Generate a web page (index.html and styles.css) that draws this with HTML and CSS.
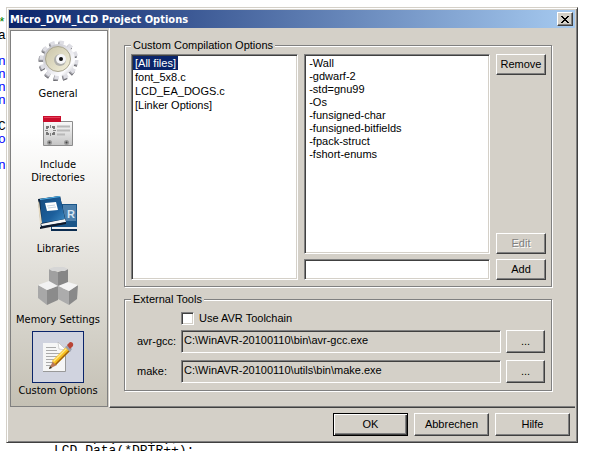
FILE: index.html
```html
<!DOCTYPE html>
<html lang="en">

<head>
    <meta charset="UTF-8">
    <title>Micro_DVM_LCD Project Options</title>
    <link rel="stylesheet" href="styles.css">
</head>

<body>
    <!-- source editor behind the dialog -->
    <pre class="editor"><span class="comment">*</span>
a

<span class="keyword">n
n
n
n</span>

C
<span class="keyword">o</span>

<span class="keyword">n</span>
</pre>
    <pre class="editor-end">LCD_Spi(0xB0|i);
LCD_Data(*DPTR++);</pre>

    <div class="window">
        <header class="titlebar">
            <h1>Micro_DVM_LCD Project Options</h1>
            <button type="button" class="close" aria-label="Close">
                <svg width="8" height="7" viewBox="0 0 8 7" shape-rendering="crispEdges">
                    <path d="M0 0h2v1h1v1h2v-1h1v-1h2v1h-1v1h-1v1h-1v1h1v1h1v1h1v1h-2v-1h-1v-1h-2v1h-1v1h-2v-1h1v-1h1v-1h1v-1h-1v-1h-1v-1h-1z" />
                </svg>
            </button>
        </header>

        <div class="main">
            <nav class="sidebar">
                <a href="#general" class="item">
                    <span class="icon">
                        <svg width="42" height="42" viewBox="0 0 42 42">
                            <defs>
                                <linearGradient id="steel" x1="0" y1="0" x2="1" y2="1">
                                    <stop offset="0" stop-color="#b8b8be" />
                                    <stop offset=".4" stop-color="#dcdce2" />
                                    <stop offset=".75" stop-color="#fdfdff" />
                                    <stop offset="1" stop-color="#b4b4ba" />
                                </linearGradient>
                                <linearGradient id="dish" x1="0" y1="0" x2="1" y2="1">
                                    <stop offset="0" stop-color="#c9c4a8" />
                                    <stop offset="1" stop-color="#f3f0dc" />
                                </linearGradient>
                            </defs>
                            <circle cx="21" cy="23" r="17" fill="none" stroke="#66666c" stroke-width="5" stroke-dasharray="4.2 4.7" />
                            <circle cx="21" cy="22" r="17" fill="none" stroke="#a2a2a8" stroke-width="5" stroke-dasharray="4.2 4.7" />
                            <circle cx="22" cy="21" r="17" fill="none" stroke="#dedee4" stroke-width="5" stroke-dasharray="4.2 4.7" />
                            <circle cx="22" cy="21" r="16" fill="url(#steel)" />
                            <circle cx="21" cy="20" r="12.5" fill="url(#dish)" stroke="#aaa690" />
                            <circle cx="23" cy="21" r="6" fill="#b0b0ac" />
                            <circle cx="24" cy="20" r="5" fill="#f6f6f8" />
                            <circle cx="24" cy="20" r="2" fill="#111" />
                        </svg>
                    </span>
                    General
                </a>
                <a href="#include" class="item">
                    <span class="icon">
                        <svg width="32" height="32" viewBox="0 0 32 32">
                            <defs>
                                <linearGradient id="folder" x1="0" y1="0" x2="0" y2="1">
                                    <stop offset="0" stop-color="#fafafa" />
                                    <stop offset="1" stop-color="#c4c4c4" />
                                </linearGradient>
                            </defs>
                            <path d="M1.500 6.500h29v24h-29z" fill="url(#folder)" stroke="#8c8c8c" />
                            <path d="M1 1h18v6H1z" fill="#c90e2c" />
                            <path d="M2 2.500h16" stroke="#e4405a" />
                            <path d="M15 11.500h13M15 15.500h13M15 19.500h8" stroke="#b8b8b8" stroke-width="2" />
                            <path d="M5 14v-2h2M10 12h2v2M12 17v2h-2M7 19H5v-2" fill="none" stroke="#777" stroke-width="2" />
                            <path d="M8.500 10v3M8.500 18v3M3 15.500h3M11 15.500h3" stroke="#888" />
                            <circle cx="7.500" cy="27.500" r="2.500" fill="#999" />
                            <circle cx="24.500" cy="27.500" r="2.500" fill="#999" />
                            <circle cx="7.500" cy="27.500" r="1" fill="#444" />
                            <circle cx="24.500" cy="27.500" r="1" fill="#444" />
                        </svg>
                    </span>
                    Include Directories
                </a>
                <a href="#libraries" class="item">
                    <span class="icon">
                        <svg width="42" height="38" viewBox="0 0 42 38">
                            <defs>
                                <linearGradient id="cover" x1="0" y1="0" x2="1" y2="1">
                                    <stop offset="0" stop-color="#174a7c" />
                                    <stop offset=".6" stop-color="#1c5f9c" />
                                    <stop offset="1" stop-color="#3f8cc4" />
                                </linearGradient>
                            </defs>
                            <path d="M24 8h16v27H14v-9z" fill="#1a5588" />
                            <path d="M26 9h13v16H26z" fill="#4d80ac" />
                            <path d="M15 31h25v2H15z" fill="#f0f0f0" />
                            <path d="M14 33h26v2H14z" fill="#0b2c50" />
                            <text class="book-letter" x="30" y="22">R</text>
                            <path d="M1 3L23 0l6 26-25 6z" fill="#0b2440" />
                            <path d="M4 28l24-5 1 3-24 4z" fill="#f5f5f5" />
                            <path d="M3 3l20-3 5 23-23 4z" fill="url(#cover)" />
                            <path d="M3 3.500L23 .5" stroke="#54b4e8" />
                            <path d="M2 5l3 22-2 1L1 7z" fill="#e5d9bf" />
                            <path d="M8 7l11-1 2 8-11 1z" fill="#fff" />
                            <path d="M10 10l8-1M11 12l8-1" stroke="#c3d2df" />
                            <path d="M3 31l26-5v2L3 33z" fill="#101828" />
                        </svg>
                    </span>
                    Libraries
                </a>
                <a href="#memory" class="item">
                    <span class="icon">
                        <svg width="42" height="40" viewBox="0 0 42 40">
                            <path d="M12 3l9 3v17l-9-3z" fill="#a0a0a0" />
                            <path d="M21 6l10-3v17l-10 3z" fill="#868686" />
                            <path d="M12 3l5-2h10l4 2-3 2H15z" fill="#d6d6d6" />
                            <path d="M1 19l9 5v15l-9-7z" fill="#a8a8a8" />
                            <path d="M10 24l11-4v14l-11 5z" fill="#8b8b8b" />
                            <path d="M1 19l11-4 9 5-11 4z" fill="#f2f2f2" />
                            <path d="M21 20l11 5v14l-11-6z" fill="#acacac" />
                            <path d="M32 25l9-6-1 14-8 6z" fill="#898989" />
                            <path d="M21 20l10-4 10 3-9 6z" fill="#f4f4f4" />
                        </svg>
                    </span>
                    Memory Settings
                </a>
                <a href="#custom" class="item selected" aria-current="page">
                    <span class="icon">
                        <svg width="32" height="32" viewBox="0 0 32 32">
                            <path d="M1 2h16l6 6v23H1z" fill="#f6f6f6" />
                            <path d="M1 30.500h22.500V9" fill="none" stroke="#999" />
                            <path d="M16 1l8 8-7-1z" fill="#fff" stroke="#aaa" stroke-width=".5" />
                            <path d="M4 6.500h10M4 9.500h11M4 12.500h15M4 15.500h14M4 18.500h11M4 21.500h9M4 24.500h6" stroke="#aaa" />
                            <path d="M7 28l4-8 4 4z" fill="#b9795a" />
                            <path d="M7 28l1-3 2 2z" fill="#332" />
                            <path d="M10 20L24 6l4 4-14 14z" fill="#f7bf1e" />
                            <path d="M11 20L24 7l1 1-13 13z" fill="#ffe887" />
                            <path d="M13 23L27 9l1 1-14 14z" fill="#9b5e10" />
                            <path d="M23 6l3-2 4 4-2 3z" fill="#9ba0ac" />
                            <path d="M25 4l3-3q4 0 3 4l-3 3z" fill="#b94436" />
                        </svg>
                    </span>
                    Custom Options
                </a>
            </nav>

            <main class="panel">
                <fieldset class="group compile">
                    <legend>Custom Compilation Options</legend>
                    <div class="compile-grid">
                        <ul class="box files" role="listbox" aria-label="Files">
                            <li role="option" aria-selected="true"><span>[All files]</span></li>
                            <li role="option"><span>font_5x8.c</span></li>
                            <li role="option"><span>LCD_EA_DOGS.c</span></li>
                            <li role="option"><span>[Linker Options]</span></li>
                        </ul>
                        <ul class="box flags" role="listbox" aria-label="Flags">
                            <li role="option">-Wall</li>
                            <li role="option">-gdwarf-2</li>
                            <li role="option">-std=gnu99</li>
                            <li role="option">-Os</li>
                            <li role="option">-funsigned-char</li>
                            <li role="option">-funsigned-bitfields</li>
                            <li role="option">-fpack-struct</li>
                            <li role="option">-fshort-enums</li>
                        </ul>
                        <div class="actions">
                            <button type="button">Remove</button>
                            <button type="button" disabled>Edit</button>
                        </div>
                        <input type="text" class="box" aria-label="New option">
                        <button type="button">Add</button>
                    </div>
                </fieldset>

                <fieldset class="group tools">
                    <legend>External Tools</legend>
                    <div class="check">
                        <input type="checkbox" id="toolchain">
                        <label for="toolchain">Use AVR Toolchain</label>
                    </div>
                    <div class="tool">
                        <label for="gcc">avr-gcc:</label>
                        <input type="text" class="box" id="gcc" value="C:\WinAVR-20100110\bin\avr-gcc.exe" readonly>
                        <button type="button" aria-label="Browse avr-gcc">...</button>
                    </div>
                    <div class="tool">
                        <label for="make">make:</label>
                        <input type="text" class="box" id="make" value="C:\WinAVR-20100110\utils\bin\make.exe" readonly>
                        <button type="button" aria-label="Browse make">...</button>
                    </div>
                </fieldset>
            </main>
        </div>

        <footer class="footer">
            <button type="button" class="default">OK</button>
            <button type="button">Abbrechen</button>
            <button type="button">Hilfe</button>
        </footer>
    </div>
</body>

</html>
```

FILE: styles.css
```css
* {
    margin: 0;
    padding: 0;
    box-sizing: border-box;
}

body {
    position: relative;
    display: flex;
    height: 100vh;
    padding: 7px 25px 8px 6px;
    background: #fff;
    color: #000;
    font: 11px/13px "Liberation Sans", Arial, sans-serif;
    overflow: hidden;
}

/* editor text */

.editor,
.editor-end {
    position: absolute;
    font: 13px/13px "Liberation Mono", "Courier New", monospace;
}

.editor {
    left: -2px;
    top: 16px;
}

.editor-end {
    left: 54px;
    top: 431px;
}

.comment {
    color: #008000;
}

.keyword {
    color: #0000ff;
}

/* dialog */

.window {
    position: relative;
    flex: 1;
    display: flex;
    flex-direction: column;
    padding: 1px;
    background: #d4d0c8;
    border: 1px solid;
    border-color: #d4d0c8 #404040 #404040 #d4d0c8;
    box-shadow: inset 1px 1px #fff, inset -1px -1px #808080;
}

.titlebar {
    display: flex;
    align-items: center;
    justify-content: space-between;
    height: 18px;
    margin: 1px 1px 0;
    padding: 0 2px 0 1px;
    background: linear-gradient(to right, #0a246a, #a6caf0);
}

.titlebar h1 {
    color: #fff;
    font: bold 11px/13px "DejaVu Sans Condensed", Tahoma, sans-serif;
}

button {
    background: #d4d0c8;
    border: 1px solid;
    border-color: #fff #404040 #404040 #fff;
    box-shadow: inset -1px -1px #808080;
    color: #000;
    font: inherit;
}

button:disabled {
    color: #808080;
    text-shadow: 1px 1px #fff;
}

.close {
    display: flex;
    align-items: center;
    justify-content: center;
    width: 16px;
    height: 14px;
}

.main {
    flex: 1;
    display: flex;
    margin: 0 1px;
}

/* category list */

.sidebar {
    display: flex;
    flex-direction: column;
    gap: 5px;
    width: 98px;
    margin: 2px 1px 1px;
    padding: 3px 2px 0 0;
    border: 1px solid #808080;
    background: linear-gradient(#fff 27%, #c4c0b4);
}

.item {
    display: flex;
    flex-direction: column;
    align-items: center;
    gap: 1px;
    padding: 0 10px;
    color: #000;
    font: 11px/13px "DejaVu Sans Condensed", Tahoma, sans-serif;
    text-align: center;
    text-decoration: none;
}

.item:nth-child(n + 4) {
    padding: 0;
}

.icon {
    display: flex;
    align-items: center;
    justify-content: center;
    width: 52px;
    height: 52px;
    border: 1px solid transparent;
}

.selected .icon {
    background: #d0d3df;
    border-color: #0a246a;
}

.book-letter {
    fill: #d5e5f2;
    font: bold 11px "Liberation Sans", Arial, sans-serif;
}

/* settings page */

.panel {
    flex: 1;
    display: flex;
    flex-direction: column;
    gap: 6px;
    padding: 11px 23px 0 14px;
    border-left: 1px solid #fff;
    border-bottom: 1px solid #404040;
    box-shadow: inset 0 -1px #808080;
}

.group {
    min-width: 0;
    border: 1px solid #808080;
    box-shadow: 1px 1px #fff, inset 1px 1px #fff;
}

legend {
    padding: 0 2px;
    background: #d4d0c8;
}

.compile {
    padding: 2px 5px 6px 6px;
}

.compile-grid {
    display: grid;
    grid-template-columns: 9fr 10fr 50px;
    grid-template-rows: 200px 21px;
    gap: 5px 6px;
}

.box {
    min-width: 0;
    border: 1px solid;
    border-color: #808080 #fff #fff #808080;
    box-shadow: inset 1px 1px #404040, inset -1px -1px #d4d0c8;
    background: #fff;
    color: #000;
    font: inherit;
    list-style: none;
    outline: none;
}

.files {
    grid-row: span 2;
    padding: 1px;
    line-height: 14px;
}

.files span {
    display: inline-block;
    padding: 0 2px;
}

.files [aria-selected] span {
    background: #0a246a;
    color: #fff;
}

.flags {
    padding: 2px 4px;
}

.actions {
    display: flex;
    flex-direction: column;
    justify-content: space-between;
}

.actions button {
    height: 21px;
}

.tools {
    padding: 6px 6px 7px;
}

.check {
    display: flex;
    align-items: center;
    gap: 5px;
    height: 13px;
    margin: 0 0 5px 50px;
}

.check input {
    appearance: none;
    width: 13px;
    height: 13px;
    border: 1px solid;
    border-color: #808080 #fff #fff #808080;
    box-shadow: inset 1px 1px #404040, inset -1px -1px #d4d0c8;
    background: #fff;
}

.tool {
    display: grid;
    grid-template-columns: 44px 1fr 39px;
    align-items: center;
    height: 23px;
    margin-left: 6px;
}

.tool + .tool {
    margin-top: 7px;
}

.tool .box {
    height: 23px;
    margin-right: 5px;
    padding: 0 2px 3px;
    background: #d4d0c8;
}

.tool button {
    height: 23px;
}

.footer {
    display: flex;
    justify-content: flex-end;
    gap: 6px;
    padding: 5px 6px;
}

.footer button {
    width: 75px;
    height: 23px;
}

.footer .default {
    border-color: #000;
    box-shadow: inset 1px 1px #fff, inset -1px -1px #404040, inset -2px -2px #808080;
}
```
